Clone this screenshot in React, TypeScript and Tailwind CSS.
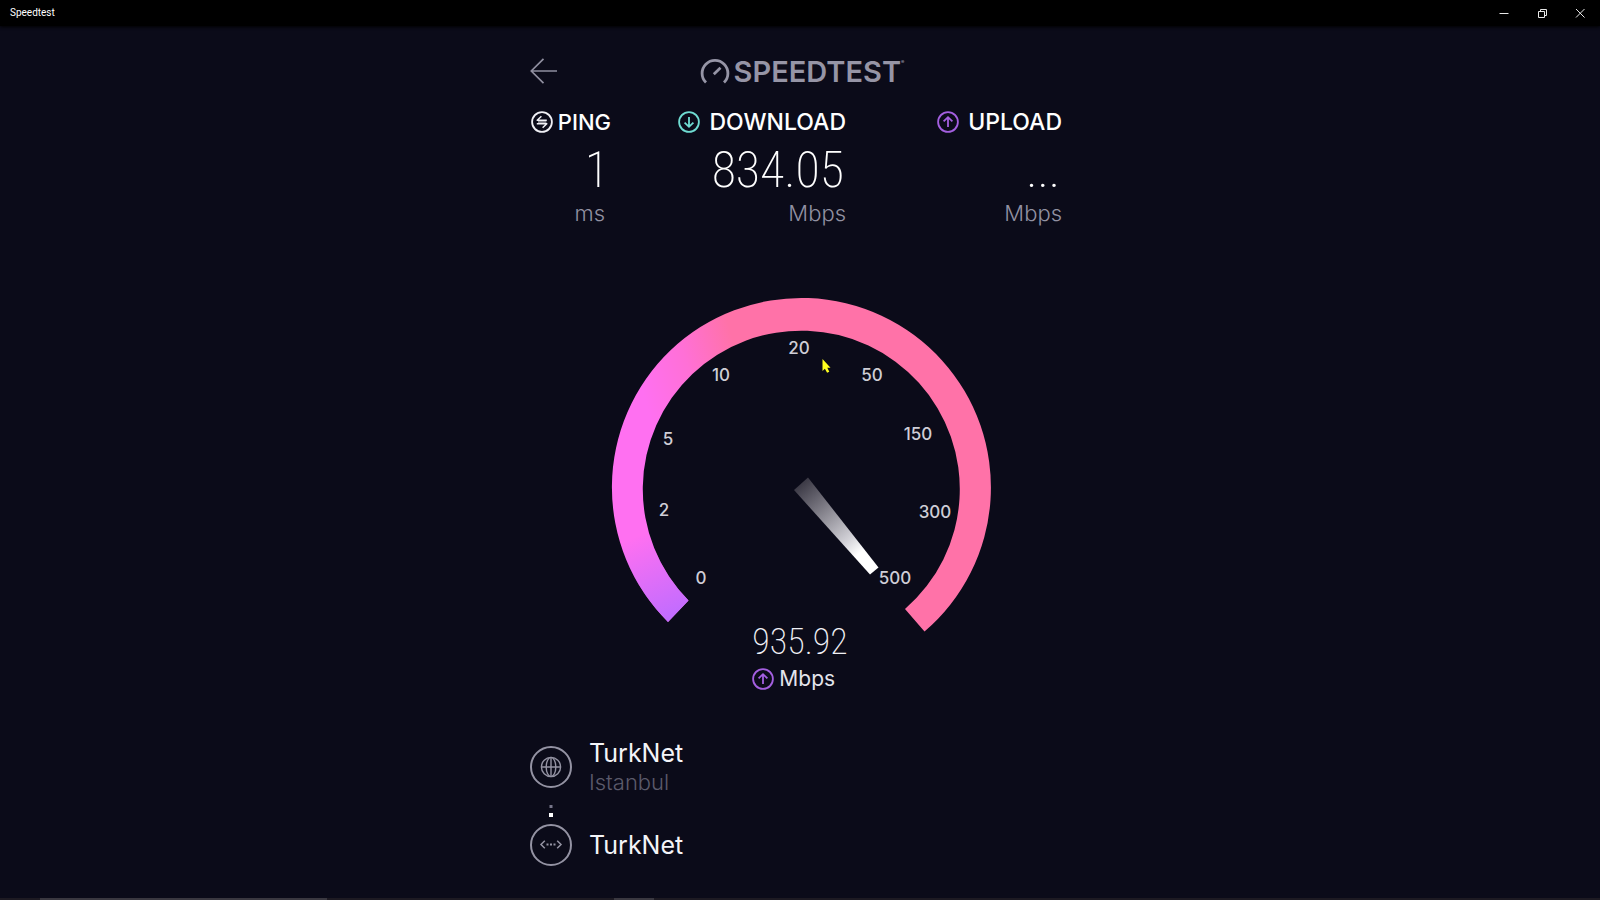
import type { ReactNode } from "react";

const TICKS = [
  { label: "0", x: 701, y: 578 },
  { label: "2", x: 664, y: 510 },
  { label: "5", x: 668, y: 439 },
  { label: "10", x: 721, y: 375 },
  { label: "20", x: 799, y: 348 },
  { label: "50", x: 872, y: 375 },
  { label: "150", x: 918, y: 434 },
  { label: "300", x: 935, y: 512 },
  { label: "500", x: 895, y: 578 },
];

function ArrowCircle({ up = false }: { up?: boolean }) {
  return (
    <svg
      viewBox="0 0 22 22"
      className={up ? "size-[22px] shrink-0 text-[#a45fe0]" : "size-[22px] shrink-0 text-[#6fdcd2]"}
      fill="none"
      stroke="currentColor"
      aria-hidden="true"
    >
      <circle cx="11" cy="11" r="9.9" strokeWidth="1.8" />
      <path
        d={up ? "M11 16V6.6M6.6 10.4 11 6.2l4.4 4.2" : "M11 6v9.4M6.6 11.6 11 15.8l4.4-4.2"}
        strokeWidth="1.8"
      />
    </svg>
  );
}

function PingIcon() {
  return (
    <svg viewBox="0 0 22 22" className="size-[22px] shrink-0" fill="none" stroke="#f0f0f5" aria-hidden="true">
      <circle cx="11" cy="11" r="9.9" strokeWidth="1.8" />
      <path d="M15.8 9.2H6.2l4.2-4M5.8 12.8h10l-4.2 4" strokeWidth="1.5" strokeLinejoin="round" />
      <path d="M7 11h8.4" strokeWidth="1" />
    </svg>
  );
}

type StatProps = {
  icon: ReactNode;
  label: string;
  value: string;
  unit: string;
  compact?: boolean;
};

function Stat({ icon, label, value, unit, compact = false }: StatProps) {
  return (
    <section className="flex flex-col items-end">
      <h2
        className={
          compact
            ? "flex h-6 items-center gap-[5px] text-[22px] leading-6 font-medium"
            : "flex h-6 items-center gap-[9px] text-[23px] leading-6 font-medium"
        }
      >
        {icon}
        {label}
      </h2>
      <p className="mt-2 h-14 pr-0.5 font-['Roboto_Condensed',sans-serif] text-[50px] leading-14 font-extralight">
        {value}
      </p>
      <p
        className={
          compact
            ? "pr-1.5 text-[22px] leading-[30px] font-light text-[#9291a2]"
            : "text-[22px] leading-[30px] font-light text-[#9291a2]"
        }
      >
        {unit}
      </p>
    </section>
  );
}

function Gauge() {
  return (
    <svg viewBox="600 288 400 350" className="h-[350px] w-[400px]" role="img" aria-label="Upload speed gauge">
      <defs>
        <linearGradient id="arc" gradientUnits="userSpaceOnUse" x1="645" y1="400" x2="742" y2="372">
          <stop offset="0" stopColor="#ff70f1" />
          <stop offset="0.5" stopColor="#ff70d6" />
          <stop offset="1" stopColor="#ff72a8" />
        </linearGradient>
        <linearGradient id="tail" gradientUnits="userSpaceOnUse" x1="676" y1="618" x2="640" y2="535">
          <stop offset="0" stopColor="#bf6cff" />
          <stop offset="1" stopColor="#bf6cff" stopOpacity="0" />
        </linearGradient>
        <linearGradient id="needle" gradientUnits="userSpaceOnUse" x1="800" y1="484" x2="874" y2="571">
          <stop offset="0" stopColor="#3b3945" />
          <stop offset="0.25" stopColor="#74727c" />
          <stop offset="0.65" stopColor="#d4d3d9" />
          <stop offset="0.8" stopColor="#ffffff" />
        </linearGradient>
      </defs>
      <path
        d="M668 622A189.5 189.5 0 1 1 924.5 631.5L905 609A158.5 158.5 0 1 0 688.5 600.5Z"
        fill="url(#arc)"
      />
      <path d="M668 622A189.5 189.5 0 0 1 612 500L643 500A158.5 158.5 0 0 0 688.5 600.5Z" fill="url(#tail)" />
      <path d="M794 490 808 477.500 878.500 567.500 870 574.500Z" fill="url(#needle)" />
      <g
        className="font-['Inter',sans-serif] text-[17px] font-medium"
        fill="#cfced6"
        textAnchor="middle"
      >
        {TICKS.map((tick) => (
          <text key={tick.label} x={tick.x} y={tick.y + 6}>
            {tick.label}
          </text>
        ))}
      </g>
      <path
        d="M822.500 359v12l2.400-2.200 2.200 3.900 2.200-1-2-3.900h3.200Z"
        fill="#ffff1e"
      />
    </svg>
  );
}

export default function App() {
  return (
    <div className="flex min-h-screen flex-col bg-[#0b0b19] font-['Inter',sans-serif] text-white">
      <header className="flex h-[26px] items-center justify-between bg-black pr-3 pl-[10px] shadow-[0_1px_3px_#000]">
        <span className="font-['Roboto',sans-serif] text-[10px] leading-none">Speedtest</span>
        <div className="flex items-center gap-[22px] text-[#e8e8e8]">
          {[
            { name: "Minimize", d: "M3.500 8.500h9" },
            { name: "Restore", d: "M4.500 6.500h6v6h-6zM6.500 6.500v-2h6v6h-2" },
            { name: "Close", d: "M4 4l8.500 8.500M12.500 4 4 12.500" },
          ].map((control) => (
            <button key={control.name} type="button" aria-label={control.name} className="size-4">
              <svg viewBox="0 0 16 16" className="size-4" fill="none" stroke="currentColor" aria-hidden="true">
                <path d={control.d} />
              </svg>
            </button>
          ))}
        </div>
      </header>

      <main className="mx-auto flex w-full max-w-[540px] grow flex-col">
        <div className="mt-7 grid h-8 grid-cols-[1fr_auto_1fr] items-center">
          <button type="button" aria-label="Back" className="w-7">
            <svg viewBox="0 0 28 28" className="size-7" fill="none" stroke="#8f8e9f" strokeWidth="1.7" aria-hidden="true">
              <path d="M27 14H1.500M13.500 1.800 1.300 14l12.200 12.200" />
            </svg>
          </button>
          <div className="flex items-center gap-1 pl-1 text-[#9695a6]">
            <svg viewBox="0 0 30 26" className="h-[26px] w-[30px]" fill="none" stroke="currentColor" aria-hidden="true">
              <path d="M6 24.600A12.900 12.900 0 1 1 24 24.600" strokeWidth="2.800" />
              <path d="M13.800 16.300 20.500 9.800" strokeWidth="2.800" />
            </svg>
            <h1 className="flex items-start pt-0.5 text-[29px] leading-8 font-semibold">
              SPEEDTEST
              <span className="pt-1 text-[5px] leading-none">®</span>
            </h1>
          </div>
        </div>

        <div className="mt-6 grid grid-cols-[81px_235px_216px]">
          <Stat icon={<PingIcon />} label="PING" value="1" unit="ms" compact />
          <Stat icon={<ArrowCircle />} label="DOWNLOAD" value="834.05" unit="Mbps" />
          <Stat icon={<ArrowCircle up />} label="UPLOAD" value="..." unit="Mbps" />
        </div>

        <div className="mt-[60px] flex flex-col items-center">
          <Gauge />
          <div className="-mt-4 flex flex-col items-start">
            <p className="font-['Roboto_Condensed',sans-serif] text-[36px] leading-10 font-extralight text-[#f0f0f5]">
              935.92
            </p>
            <p className="flex items-center gap-[5px] text-[21px] leading-[34px] text-[#e4e4ec]">
              <ArrowCircle up />
              Mbps
            </p>
          </div>
        </div>

        <div className="mt-[42px] grid grid-cols-[42px_auto] items-center justify-start gap-x-[17px]">
          <svg viewBox="0 0 42 42" className="size-[42px]" fill="none" stroke="#9493a3" aria-hidden="true">
            <circle cx="21" cy="21" r="20" strokeWidth="2" />
            <g strokeWidth="1.400">
              <circle cx="21" cy="21" r="9.600" />
              <ellipse cx="21" cy="21" rx="4.800" ry="9.600" />
              <path d="M11.400 21h19.200M21 11.400v19.200" />
            </g>
          </svg>
          <div>
            <p className="text-[25px] leading-[30px] text-[#f4f4f8]">TurkNet</p>
            <p className="text-[22px] leading-7 font-light text-[#5b5a6b]">Istanbul</p>
          </div>
          <svg viewBox="0 0 42 28" className="h-7 w-[42px]" aria-hidden="true">
            <path d="M19.500 9h3v3h-3z" fill="#77768a" />
            <path d="M19 17h4v4h-4z" fill="#ffffff" />
          </svg>
          <span />
          <svg viewBox="0 0 42 42" className="size-[42px]" fill="none" stroke="#9493a3" aria-hidden="true">
            <circle cx="21" cy="21" r="20" strokeWidth="2" />
            <path d="M14.800 16.800 11 20.500l3.800 3.700M27.200 16.800l3.800 3.700-3.800 3.700" strokeWidth="1.500" />
            <path d="M16.500 19.500h2v2h-2zM20 19.500h2v2h-2zM23.500 19.500h2v2h-2z" fill="#9493a3" stroke="none" />
          </svg>
          <p className="text-[25px] leading-[30px] text-[#f4f4f8]">TurkNet</p>
        </div>
      </main>

      <footer className="flex h-0.5 bg-[#1d1a22]" aria-hidden="true">
        <span className="ml-10 w-[287px] bg-[#3a3840]" />
        <span className="ml-[287px] w-10 bg-[#3a3840]" />
      </footer>
    </div>
  );
}
